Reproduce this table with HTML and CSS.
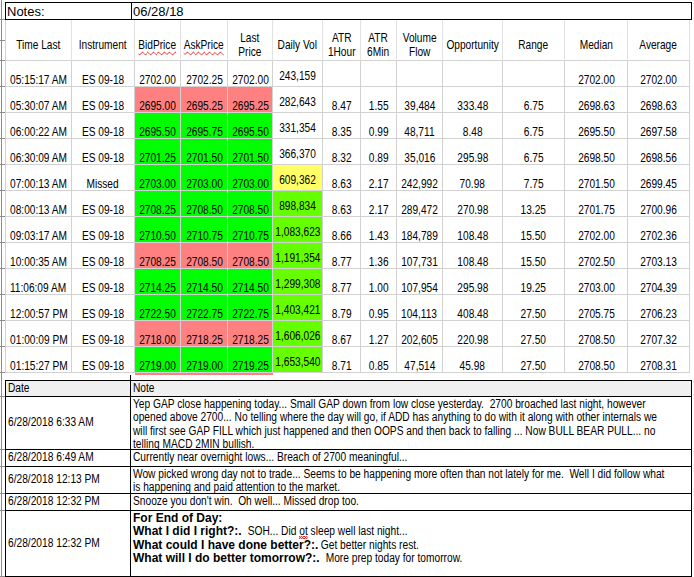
FILE: index.html
```html
<!DOCTYPE html>
<html>
<head>
<meta charset="utf-8">
<title>Trading Notes</title>
<link rel="stylesheet" href="styles.css">
</head>
<body>
<div class="sheet">
  <div class="top"><div class="stub plain"></div><div></div></div>
  <div class="notes-bar">
    <div class="stub"></div>
    <div class="nb-label">Notes:</div>
    <div class="nb-date">06/28/18</div>
  </div>

  <div class="grid">
    <div class="stub stub-hdr"></div>
    <div class="h first"><span>Time Last</span></div>
    <div class="h"><span>Instrument</span></div>
    <div class="h"><span><span class="sp">BidPrice</span></span></div>
    <div class="h"><span><span class="sp">AskPrice</span></span></div>
    <div class="h"><span>Last<br>Price</span></div>
    <div class="h"><span>Daily Vol</span></div>
    <div class="h"><span>ATR<br>1Hour</span></div>
    <div class="h"><span>ATR<br>6Min</span></div>
    <div class="h"><span>Volume<br>Flow</span></div>
    <div class="h"><span>Opportunity</span></div>
    <div class="h"><span>Range</span></div>
    <div class="h"><span>Median</span></div>
    <div class="h"><span>Average</span></div>

    <div class="stub"></div>
    <div class="c first"><span>05:15:17 AM</span></div><div class="c"><span>ES 09-18</span></div>
    <div class="c"><span>2702.00</span></div><div class="c"><span>2702.25</span></div><div class="c"><span>2702.00</span></div>
    <div class="c dv"><span>243,159</span></div>
    <div class="c"></div><div class="c"></div><div class="c"></div><div class="c"></div><div class="c"></div>
    <div class="c"><span>2702.00</span></div><div class="c"><span>2702.00</span></div>

    <div class="stub"></div>
    <div class="c first"><span>05:30:07 AM</span></div><div class="c"><span>ES 09-18</span></div>
    <div class="c r"><span>2695.00</span></div><div class="c r"><span>2695.25</span></div><div class="c r"><span>2695.25</span></div>
    <div class="c dv"><span>282,643</span></div>
    <div class="c"><span>8.47</span></div><div class="c"><span>1.55</span></div><div class="c"><span>39,484</span></div><div class="c"><span>333.48</span></div><div class="c"><span>6.75</span></div>
    <div class="c"><span>2698.63</span></div><div class="c"><span>2698.63</span></div>

    <div class="stub"></div>
    <div class="c first"><span>06:00:22 AM</span></div><div class="c"><span>ES 09-18</span></div>
    <div class="c g"><span>2695.50</span></div><div class="c g"><span>2695.75</span></div><div class="c g"><span>2695.50</span></div>
    <div class="c dv"><span>331,354</span></div>
    <div class="c"><span>8.35</span></div><div class="c"><span>0.99</span></div><div class="c"><span>48,711</span></div><div class="c"><span>8.48</span></div><div class="c"><span>6.75</span></div>
    <div class="c"><span>2695.50</span></div><div class="c"><span>2697.58</span></div>

    <div class="stub"></div>
    <div class="c first"><span>06:30:09 AM</span></div><div class="c"><span>ES 09-18</span></div>
    <div class="c g"><span>2701.25</span></div><div class="c g"><span>2701.50</span></div><div class="c g"><span>2701.50</span></div>
    <div class="c dv"><span>366,370</span></div>
    <div class="c"><span>8.32</span></div><div class="c"><span>0.89</span></div><div class="c"><span>35,016</span></div><div class="c"><span>295.98</span></div><div class="c"><span>6.75</span></div>
    <div class="c"><span>2698.50</span></div><div class="c"><span>2698.56</span></div>

    <div class="stub"></div>
    <div class="c first"><span>07:00:13 AM</span></div><div class="c"><span>Missed</span></div>
    <div class="c g"><span>2703.00</span></div><div class="c g"><span>2703.00</span></div><div class="c g"><span>2703.00</span></div>
    <div class="c dv y"><span>609,362</span></div>
    <div class="c"><span>8.63</span></div><div class="c"><span>2.17</span></div><div class="c"><span>242,992</span></div><div class="c"><span>70.98</span></div><div class="c"><span>7.75</span></div>
    <div class="c"><span>2701.50</span></div><div class="c"><span>2699.45</span></div>

    <div class="stub"></div>
    <div class="c first"><span>08:00:13 AM</span></div><div class="c"><span>ES 09-18</span></div>
    <div class="c g"><span>2708.25</span></div><div class="c g"><span>2708.50</span></div><div class="c g"><span>2708.50</span></div>
    <div class="c dv lg"><span>898,834</span></div>
    <div class="c"><span>8.63</span></div><div class="c"><span>2.17</span></div><div class="c"><span>289,472</span></div><div class="c"><span>270.98</span></div><div class="c"><span>13.25</span></div>
    <div class="c"><span>2701.75</span></div><div class="c"><span>2700.96</span></div>

    <div class="stub"></div>
    <div class="c first"><span>09:03:17 AM</span></div><div class="c"><span>ES 09-18</span></div>
    <div class="c g"><span>2710.50</span></div><div class="c g"><span>2710.75</span></div><div class="c g"><span>2710.75</span></div>
    <div class="c dv lg"><span>1,083,623</span></div>
    <div class="c"><span>8.66</span></div><div class="c"><span>1.43</span></div><div class="c"><span>184,789</span></div><div class="c"><span>108.48</span></div><div class="c"><span>15.50</span></div>
    <div class="c"><span>2702.00</span></div><div class="c"><span>2702.36</span></div>

    <div class="stub"></div>
    <div class="c first"><span>10:00:35 AM</span></div><div class="c"><span>ES 09-18</span></div>
    <div class="c r"><span>2708.25</span></div><div class="c r"><span>2708.50</span></div><div class="c r"><span>2708.50</span></div>
    <div class="c dv lg"><span>1,191,354</span></div>
    <div class="c"><span>8.77</span></div><div class="c"><span>1.36</span></div><div class="c"><span>107,731</span></div><div class="c"><span>108.48</span></div><div class="c"><span>15.50</span></div>
    <div class="c"><span>2702.50</span></div><div class="c"><span>2703.13</span></div>

    <div class="stub"></div>
    <div class="c first"><span>11:06:09 AM</span></div><div class="c"><span>ES 09-18</span></div>
    <div class="c g"><span>2714.25</span></div><div class="c g"><span>2714.50</span></div><div class="c g"><span>2714.50</span></div>
    <div class="c dv lg"><span>1,299,308</span></div>
    <div class="c"><span>8.77</span></div><div class="c"><span>1.00</span></div><div class="c"><span>107,954</span></div><div class="c"><span>295.98</span></div><div class="c"><span>19.25</span></div>
    <div class="c"><span>2703.00</span></div><div class="c"><span>2704.39</span></div>

    <div class="stub"></div>
    <div class="c first"><span>12:00:57 PM</span></div><div class="c"><span>ES 09-18</span></div>
    <div class="c g"><span>2722.50</span></div><div class="c g"><span>2722.75</span></div><div class="c g"><span>2722.75</span></div>
    <div class="c dv lg"><span>1,403,421</span></div>
    <div class="c"><span>8.79</span></div><div class="c"><span>0.95</span></div><div class="c"><span>104,113</span></div><div class="c"><span>408.48</span></div><div class="c"><span>27.50</span></div>
    <div class="c"><span>2705.75</span></div><div class="c"><span>2706.23</span></div>

    <div class="stub"></div>
    <div class="c first"><span>01:00:09 PM</span></div><div class="c"><span>ES 09-18</span></div>
    <div class="c r"><span>2718.00</span></div><div class="c r"><span>2718.25</span></div><div class="c r"><span>2718.25</span></div>
    <div class="c dv lg"><span>1,606,026</span></div>
    <div class="c"><span>8.67</span></div><div class="c"><span>1.27</span></div><div class="c"><span>202,605</span></div><div class="c"><span>220.98</span></div><div class="c"><span>27.50</span></div>
    <div class="c"><span>2708.50</span></div><div class="c"><span>2707.32</span></div>

    <div class="stub"></div>
    <div class="c first"><span>01:15:27 PM</span></div><div class="c"><span>ES 09-18</span></div>
    <div class="c g"><span>2719.00</span></div><div class="c g"><span>2719.00</span></div><div class="c g"><span>2719.25</span></div>
    <div class="c dv lg"><span>1,653,540</span></div>
    <div class="c"><span>8.71</span></div><div class="c"><span>0.85</span></div><div class="c"><span>47,514</span></div><div class="c"><span>45.98</span></div><div class="c"><span>27.50</span></div>
    <div class="c"><span>2708.50</span></div><div class="c"><span>2708.31</span></div>

    <div class="stub plain"></div>
    <div class="p"></div><div class="p"></div>
    <div class="p r"></div><div class="p r"></div><div class="p r"></div>
    <div class="p"></div><div class="p"></div><div class="p"></div><div class="p"></div><div class="p"></div><div class="p"></div><div class="p"></div><div class="p"></div>
  </div>

  <div class="spacer"><div class="stub plain"></div><div class="sp-left"></div><div></div></div>

  <div class="notes">
    <div class="stub"></div>
    <div class="nd nh"><span>Date</span></div>
    <div class="nn nh"><span>Note</span></div>

    <div class="stub"></div>
    <div class="nd"><span>6/28/2018 6:33 AM</span></div>
    <div class="nn"><span>Yep GAP close happening today... Small GAP down from low close yesterday.&nbsp; 2700 broached last night, however<br>opened above 2700... No telling where the day will go, if ADD has anything to do with it along with other internals we<br>will first see GAP FILL which just happened and then OOPS and then back to falling ... Now BULL BEAR PULL... no<br>telling MACD 2MIN bullish.</span></div>

    <div class="stub"></div>
    <div class="nd"><span>6/28/2018 6:49 AM</span></div>
    <div class="nn"><span>Currently near overnight lows... Breach of 2700 meaningful...</span></div>

    <div class="stub"></div>
    <div class="nd"><span>6/28/2018 12:13 PM</span></div>
    <div class="nn"><span>Wow picked wrong day not to trade... Seems to be happening more often than not lately for me.&nbsp; Well I did follow what<br>is happening and paid attention to the market.</span></div>

    <div class="stub"></div>
    <div class="nd"><span>6/28/2018 12:32 PM</span></div>
    <div class="nn"><span>Snooze you don't win.&nbsp; Oh well... Missed drop too.</span></div>

    <div class="stub"></div>
    <div class="nd"><span>6/28/2018 12:32 PM</span></div>
    <div class="nn mix"><span class="ln"><b>For End of Day:</b></span><span class="ln"><b>What I did I right?:.</b><span class="rg">  SOH... Did <span class="typo">ot</span> sleep well last night...</span></span><span class="ln"><b>What could I have done better?:.</b><span class="rg"> Get better nights rest.</span></span><span class="ln"><b>What will I do better tomorrow?:.</b><span class="rg">  More prep today for tomorrow.</span></span></div>
  </div>
</div>
</body>
</html>
```

FILE: styles.css
```css
html, body {
  margin: 0;
  padding: 0;
  background: #ffffff;
}

body {
  font-family: "Liberation Sans", Arial, sans-serif;
  color: #000;
  overflow: hidden;
}

.sheet {
  width: 694px;
  height: 577px;
  overflow: hidden;
}

/* Excel row-header remnant on the far left */
.stub {
  background: linear-gradient(to right, transparent 1px, #8c8c8c 1px, #8c8c8c 2px, transparent 2px);
  border-bottom: 1px solid #8c8c8c;
  box-sizing: border-box;
}

.stub.plain {
  border-bottom: none;
}

.stub-hdr {
  background:
    linear-gradient(to bottom, transparent 20px, #8c8c8c 20px, #8c8c8c 21px, transparent 21px),
    linear-gradient(to right, transparent 1px, #8c8c8c 1px, #8c8c8c 2px, transparent 2px);
}

.top {
  display: grid;
  grid-template-columns: 5px 1fr;
  height: 2px;
}

/* Notes / date bar */
.notes-bar {
  display: grid;
  grid-template-columns: 5px 126px 561px;
  height: 18px;
  font-size: 13px;
  line-height: 15px;
}

.nb-label,
.nb-date {
  border: 1px solid #000;
  padding: 1px 0 0 1px;
  box-sizing: border-box;
}

.nb-label {
  border-right: none;
}

/* Data grid */
.grid {
  display: grid;
  grid-template-columns: 5px 67px 63px 46px 47px 45px 50px 38px 36px 46px 60px 62px 63px 62px;
  grid-template-rows: 41px repeat(12, 26px) 2px;
  font-size: 13px;
}

.h,
.c {
  box-sizing: border-box;
  border-right: 1px solid #d2d2d2;
  border-bottom: 1px solid #d2d2d2;
  display: flex;
  justify-content: center;
  text-align: center;
  white-space: nowrap;
}

.h > span,
.c > span {
  display: inline-block;
  transform: scaleX(0.78);
  transform-origin: 50% 50%;
}

.first {
  border-left: 1px solid #d2d2d2;
}

.h {
  align-items: center;
  padding-top: 9px;
  line-height: 14px;
  border-right-color: #e2e2e2;
}

.c {
  align-items: flex-start;
  padding-top: 11px;
  line-height: 15px;
}

.c.dv {
  padding-top: 7px;
}

.sp {
  text-decoration: underline wavy #e81010;
  text-decoration-thickness: 1px;
  text-underline-offset: 2px;
  text-decoration-skip-ink: none;
}

/* spelling squiggle drawn as a zigzag background */
.typo {
  background:
    linear-gradient(135deg, transparent 40%, #e81010 40%, #e81010 60%, transparent 60%) 0 100% / 3px 3px repeat-x,
    linear-gradient(45deg, transparent 40%, #e81010 40%, #e81010 60%, transparent 60%) 0 100% / 3px 3px repeat-x;
  padding-bottom: 1px;
}

.r { background: #ff8080; }
.g { background: #00ff00; }
.lg { background: #66ff00; }
.y { background: #ffff66; }

.p {
  height: 2px;
}

/* spacer between grids */
.spacer {
  display: grid;
  grid-template-columns: 5px 126px 561px;
  height: 5px;
}

.sp-left {
  border-right: 1px solid #000;
}

/* Notes grid */
.notes {
  display: grid;
  grid-template-columns: 5px 126px 561px;
  grid-template-rows: 17px 53px 17px 27px 17px 66px;
  font-size: 12px;
  line-height: 13.3px;
}

.nd,
.nn {
  box-sizing: border-box;
  border-right: 1px solid #000;
  border-bottom: 1px solid #000;
  white-space: nowrap;
  overflow: hidden;
}

.nd > span,
.nn > span {
  display: inline-block;
  transform: scaleX(0.85);
  transform-origin: 0 50%;
}

.nd {
  border-left: 1px solid #000;
  display: flex;
  align-items: center;
  padding-left: 2px;
}

.nn {
  padding: 1px 0 0 2px;
}

.nn > span {
  transform-origin: 0 0;
}

/* mixed bold / regular lines: bold runs at full width */
.mix > .ln {
  display: flex;
  height: 13.3px;
  transform: none;
}

.mix b {
  font-weight: bold;
  white-space: pre;
}

.mix .rg {
  display: inline-block;
  white-space: pre;
  transform: scaleX(0.85);
  transform-origin: 0 0;
}

.nh {
  background: #f0f0f0;
  border-top: 1px solid #000;
  display: flex;
  align-items: center;
  padding-top: 1px;
}
```
